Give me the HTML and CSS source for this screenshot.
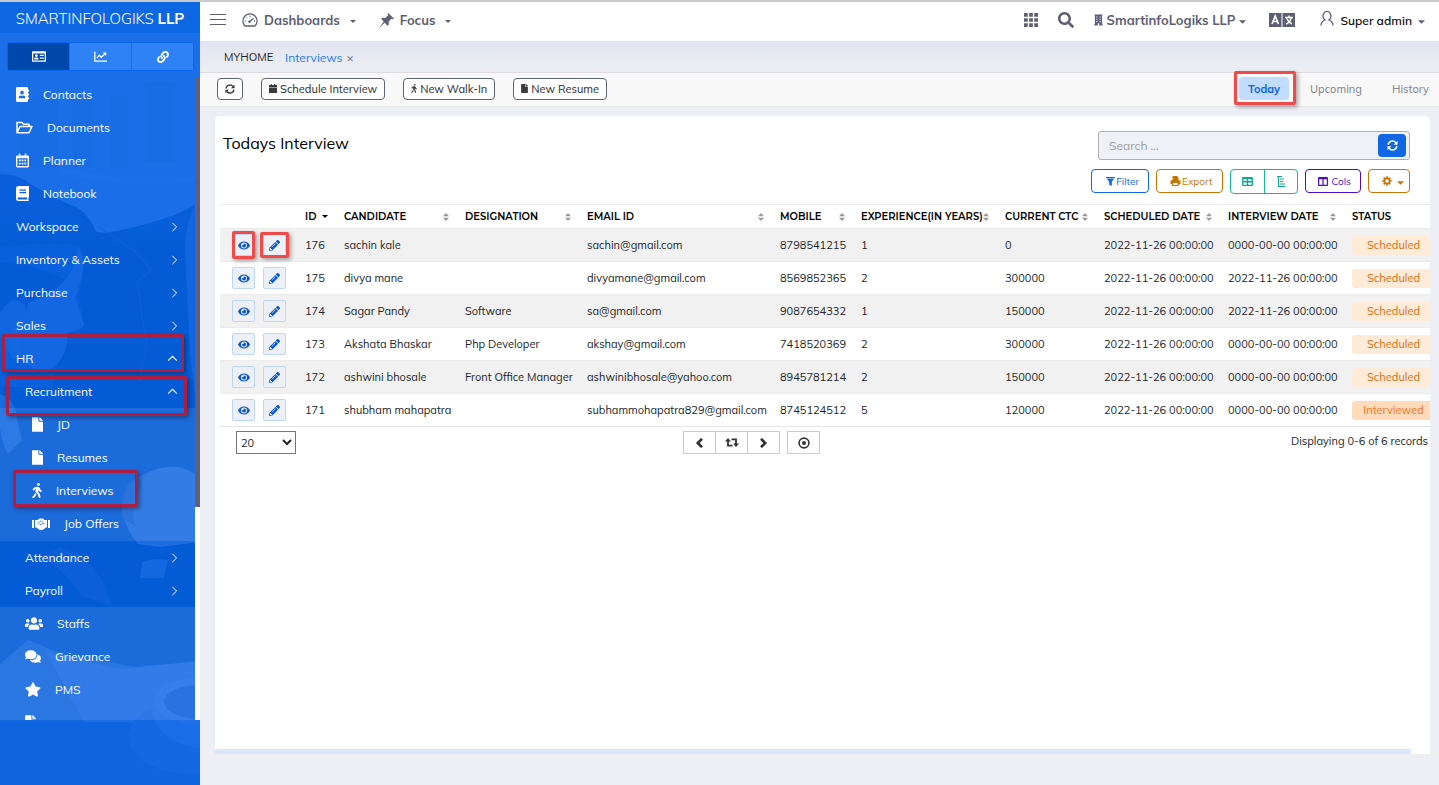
FILE: index.html
```html
<!DOCTYPE html>
<html lang="en">
<head>
    <meta charset="UTF-8">
    <meta name="viewport" content="width=device-width, initial-scale=1.0">
    <title>Todays Interview</title>
    <link rel="stylesheet" href="styles.css">
</head>
<body>
    <!-- Icon sprite -->
    <svg class="sprite" aria-hidden="true">
        <symbol id="eye" viewBox="0 0 576 512"><path d="M572.52 241.4C518.29 135.59 410.93 64 288 64S57.68 135.64 3.48 241.41a32.35 32.35 0 0 0 0 29.19C57.71 376.41 165.07 448 288 448s230.32-71.64 284.52-177.41a32.35 32.35 0 0 0 0-29.19zM288 400a144 144 0 1 1 144-144 143.93 143.93 0 0 1-144 144zm0-240a95.31 95.31 0 0 0-25.31 3.79 47.85 47.85 0 0 1-66.9 66.9A95.78 95.78 0 1 0 288 160z"/></symbol>
        <symbol id="pencil" viewBox="0 0 512 512"><path d="M497.9 142.1l-46.1 46.1c-4.7 4.7-12.3 4.7-17 0l-111-111c-4.7-4.7-4.7-12.3 0-17l46.1-46.1c18.7-18.7 49.1-18.7 67.9 0l60.1 60.1c18.8 18.7 18.8 49.1 0 67.9zM284.2 99.8L21.6 362.4.4 483.9c-2.9 16.4 11.4 30.6 27.8 27.8l121.5-21.3 262.6-262.6c4.7-4.7 4.7-12.3 0-17l-111-111c-4.8-4.7-12.4-4.7-17.1 0zM124.1 339.9c-5.5-5.5-5.5-14.3 0-19.8l154-154c5.5-5.5 14.3-5.5 19.8 0s5.5 14.3 0 19.8l-154 154c-5.5 5.5-14.3 5.5-19.8 0zM88 424h48v36.3l-64.5 11.3-31.1-31.1L51.7 376H88v48z"/></symbol>
        <symbol id="search" viewBox="0 0 512 512"><path d="M505 442.7L405.3 343c-4.5-4.5-10.6-7-17-7H372c27.6-35.3 44-79.7 44-128C416 93.1 322.9 0 208 0S0 93.1 0 208s93.1 208 208 208c48.3 0 92.7-16.4 128-44v16.3c0 6.4 2.5 12.5 7 17l99.7 99.7c9.4 9.4 24.6 9.4 33.9 0l28.3-28.3c9.4-9.4 9.4-24.6.1-34zM208 336c-70.7 0-128-57.2-128-128 0-70.7 57.2-128 128-128 70.7 0 128 57.2 128 128 0 70.7-57.2 128-128 128z"/></symbol>
        <symbol id="file" viewBox="0 0 384 512"><path d="M224 136V0H24C10.7 0 0 10.7 0 24v464c0 13.3 10.7 24 24 24h336c13.3 0 24-10.7 24-24V160H248c-13.2 0-24-10.8-24-24zm160-14.1v6.1H256V0h6.1c6.4 0 12.5 2.5 17 7l97.9 98c4.5 4.5 7 10.6 7 16.9z"/></symbol>
        <symbol id="walking" viewBox="0 0 320 512"><path d="M208 96c26.5 0 48-21.5 48-48S234.5 0 208 0s-48 21.5-48 48 21.5 48 48 48zm94.5 149.1l-23.3-11.8-9.7-29.4c-14.7-44.6-55.7-75.8-102.2-75.9-36-.1-55.9 10.1-93.3 25.2-21.6 8.7-39.3 25.2-49.7 46.2L17.6 213c-7.8 15.8-1.5 35 14.2 42.9 15.6 7.9 34.6 1.5 42.5-14.3L81 228c3.5-7 9.3-12.5 16.5-15.4l26.8-10.8-15.2 60.7c-5.2 20.8.4 42.9 14.9 58.8l59.9 65.4c7.2 7.9 12.3 17.4 14.9 27.7l18.3 73.3c4.3 17.1 21.7 27.6 38.8 23.3 17.1-4.3 27.6-21.7 23.3-38.8l-22.2-89c-2.6-10.3-7.7-19.9-14.9-27.7l-45.5-49.7 17.2-68.7 5.5 16.5c5.3 16.1 16.7 29.4 31.7 37l23.3 11.8c15.6 7.9 34.6 1.5 42.5-14.3 7.7-15.7 1.4-35.1-14.3-43zM73.6 385.8c-3.2 8.1-8 15.4-14.2 21.5l-50 50.1c-12.5 12.5-12.5 32.8 0 45.3s32.7 12.5 45.2 0l59.4-59.4c6.1-6.1 10.9-13.4 14.2-21.5l13.5-33.8c-55.3-60.3-38.7-41.8-47.4-53.7l-20.7 51.5z"/></symbol>
        <symbol id="star" viewBox="0 0 576 512"><path d="M259.3 17.8L194 150.2 47.9 171.5c-26.2 3.8-36.7 36.1-17.7 54.6l105.7 103-25 145.5c-4.5 26.3 23.2 46 46.4 33.7L288 439.6l130.7 68.7c23.2 12.2 50.9-7.4 46.4-33.7l-25-145.5 105.7-103c19-18.5 8.5-50.8-17.7-54.6L382 150.2 316.7 17.8c-11.7-23.6-45.6-23.9-57.4 0z"/></symbol>
        <symbol id="users" viewBox="0 0 640 512"><path d="M96 224c35.3 0 64-28.7 64-64s-28.7-64-64-64-64 28.7-64 64 28.7 64 64 64zm448 0c35.3 0 64-28.7 64-64s-28.7-64-64-64-64 28.7-64 64 28.7 64 64 64zm32 32h-64c-17.6 0-33.5 7.1-45.1 18.6 40.3 22.1 68.9 62 75.1 109.4h66c17.7 0 32-14.3 32-32v-32c0-35.3-28.7-64-64-64zm-256 0c61.9 0 112-50.1 112-112S381.9 32 320 32 208 82.1 208 144s50.1 112 112 112zm76.8 32h-8.3c-20.8 10-43.9 16-68.5 16s-47.6-6-68.5-16h-8.3C179.6 288 128 339.6 128 403.2V432c0 26.5 21.5 48 48 48h288c26.5 0 48-21.5 48-48v-28.8c0-63.6-51.6-115.2-115.2-115.2zm-223.7-13.4C161.5 263.1 145.6 256 128 256H64c-35.3 0-64 28.7-64 64v32c0 17.7 14.3 32 32 32h65.9c6.3-47.4 34.9-87.3 75.2-109.4z"/></symbol>
        <symbol id="comments" viewBox="0 0 576 512"><path d="M416 192c0-88.4-93.1-160-208-160S0 103.6 0 192c0 34.3 14.1 65.9 38 92-13.4 30.2-35.5 54.2-35.8 54.5-2.2 2.3-2.8 5.7-1.5 8.7S4.8 352 8 352c36.6 0 66.9-12.3 88.7-25 32.2 15.7 70.3 25 111.3 25 114.9 0 208-71.6 208-160zm122 220c23.9-26 38-57.7 38-92 0-66.9-53.5-124.2-129.3-148.1.9 6.6 1.3 13.3 1.3 20.1 0 105.9-107.7 192-240 192-10.8 0-21.3-.8-31.7-1.9C207.8 439.6 281.8 480 368 480c41 0 79.1-9.2 111.3-25 21.8 12.7 52.1 25 88.7 25 3.2 0 6.1-1.9 7.3-4.8 1.3-2.9.7-6.3-1.5-8.7-.3-.3-22.4-24.2-35.8-54.5z"/></symbol>
        <symbol id="contacts" viewBox="0 0 448 512"><path d="M436 160c6.6 0 12-5.4 12-12v-40c0-6.6-5.4-12-12-12h-20V48c0-26.5-21.5-48-48-48H48C21.5 0 0 21.5 0 48v416c0 26.5 21.5 48 48 48h320c26.5 0 48-21.5 48-48v-48h20c6.6 0 12-5.4 12-12v-40c0-6.6-5.4-12-12-12h-20v-64h20c6.6 0 12-5.4 12-12v-40c0-6.6-5.4-12-12-12h-20v-64h20zm-228-32c35.3 0 64 28.7 64 64s-28.7 64-64 64-64-28.7-64-64 28.7-64 64-64zm112 236.8c0 10.6-10 19.2-22.4 19.2H118.4C106 384 96 375.4 96 364.8v-19.2c0-31.8 30.1-57.6 67.2-57.6h5c12.3 5.1 25.7 8 39.8 8s27.6-2.9 39.8-8h5c37.1 0 67.2 25.8 67.2 57.6v19.2z"/></symbol>
        <symbol id="link" viewBox="0 0 512 512"><path d="M326.612 185.391c59.747 59.809 58.927 155.698.36 214.59-.11.12-.24.25-.36.37l-67.2 67.2c-59.27 59.27-155.699 59.262-214.96 0-59.27-59.26-59.27-155.7 0-214.96l37.106-37.106c9.84-9.84 26.786-3.3 27.294 10.606.648 17.722 3.826 35.527 9.69 52.721 1.986 5.822.567 12.262-3.783 16.612l-13.087 13.087c-28.026 28.026-28.905 73.66-1.155 101.96 28.024 28.579 74.086 28.749 102.325.51l67.2-67.19c28.191-28.191 28.073-73.757 0-101.83-3.701-3.694-7.429-6.564-10.341-8.569a16.037 16.037 0 0 1-6.947-12.606c-.396-10.567 3.348-21.456 11.698-29.806l21.054-21.055c5.521-5.521 14.182-6.199 20.584-1.731a152.482 152.482 0 0 1 20.522 17.197zM467.547 44.449c-59.261-59.262-155.69-59.27-214.96 0l-67.2 67.2c-.12.12-.25.25-.36.37-58.566 58.892-59.387 154.781.36 214.59a152.454 152.454 0 0 0 20.521 17.196c6.402 4.468 15.064 3.789 20.584-1.731l21.054-21.055c8.35-8.35 12.094-19.239 11.698-29.806a16.037 16.037 0 0 0-6.947-12.606c-2.912-2.005-6.64-4.875-10.341-8.569-28.073-28.073-28.191-73.639 0-101.83l67.2-67.19c28.239-28.239 74.3-28.069 102.325.51 27.75 28.3 26.872 73.934-1.155 101.96l-13.087 13.087c-4.35 4.35-5.769 10.79-3.783 16.612 5.864 17.194 9.042 34.999 9.69 52.721.509 13.906 17.454 20.446 27.294 10.606l37.106-37.106c59.271-59.259 59.271-155.699.001-214.959z"/></symbol>
        <symbol id="filter" viewBox="0 0 14 14"><path d="M0 0h14v1.500H0zM1 2.500h12L9 7.500V14l-4-2V7.500z"/></symbol>
        <symbol id="idcard" viewBox="0 0 16 12"><path fill-rule="evenodd" d="M1 0h14a1 1 0 0 1 1 1v10a1 1 0 0 1-1 1H1a1 1 0 0 1-1-1V1a1 1 0 0 1 1-1zM1.500 2.500v8h13v-8z"/><circle cx="5" cy="5" r="1.500"/><path d="M2.500 9.500V8.500q0-1.500 2.500-1.500t2.500 1.500v1zM9 4h4.500v1.500H9zM9 7h4.500v1.500H9z"/></symbol>
        <symbol id="chart" viewBox="0 0 16 13"><path fill="none" stroke="currentColor" stroke-width="1.600" d="M1 .5v11.700h15M3.500 8.500l3-3.500 2.500 2.500 4.500-4.500"/><path d="M10.500 1.500H15V6z"/></symbol>
        <symbol id="folder" viewBox="0 0 17 13"><path fill="none" stroke="currentColor" stroke-width="1.500" stroke-linejoin="round" d="M1 11.500V1.500h5l1.500 1.700H13v2.300M1 11.800l3-6.300h12l-3 6.300z"/></symbol>
        <symbol id="calgrid" viewBox="0 0 14 15"><path fill-rule="evenodd" d="M3 0h1.500v2h5V0H11v2h1.500A1.500 1.500 0 0 1 14 3.500v10a1.500 1.500 0 0 1-1.500 1.500h-11A1.500 1.500 0 0 1 0 13.500v-10A1.500 1.500 0 0 1 1.500 2H3zM1.500 5v8.500h11V5z"/><path d="M3 6.300h2v2H3zM6 6.300h2v2H6zM9 6.300h2v2H9zM3 9.800h2v2H3zM6 9.800h2v2H6zM9 9.800h2v2H9z"/></symbol>
        <symbol id="book" viewBox="0 0 13 15"><path fill-rule="evenodd" d="M2.500 0H13v11l-.6 1v2l.6 1H2.500A2.500 2.500 0 0 1 0 12.500v-10A2.500 2.500 0 0 1 2.500 0zM3.500 3.500v1.300h6.500V3.500zM3.500 6v1.300h6.500V6zM2.500 11.500a1 1 0 0 0 0 2h8.500v-2z"/></symbol>
        <symbol id="handshake" viewBox="0 0 18 12"><path d="M0 2h2v8H0zM16 2h2v8h-2z"/><path d="M3 2h2.500L7.500.5h3.500L12.500 2H15v7.500h-1.200L10.500 12H8L4.300 9.500H3z"/><path fill="none" stroke="#1f6ddb" stroke-width=".8" d="M5.500 6l3.700-3.300L13 6.500M7.500 6.300l2 .3 1.500-1.600"/></symbol>
        <symbol id="chev-right" viewBox="0 0 8 12"><path fill="none" stroke="currentColor" stroke-width="1.200" d="M1.500 1l5 5-5 5"/></symbol>
        <symbol id="chev-up" viewBox="0 0 12 8"><path fill="none" stroke="currentColor" stroke-width="1.200" d="M1 6.500l5-5 5 5"/></symbol>
        <symbol id="menu" viewBox="0 0 16 14"><path fill="none" stroke="currentColor" stroke-width="1.200" d="M0 1.500h16M0 6.500h16M0 11.500h16"/></symbol>
        <symbol id="gauge" viewBox="0 0 16 14"><path fill="none" stroke="currentColor" stroke-width="1.300" stroke-linejoin="round" d="M3 13a7.100 7.100 0 1 1 10 0zM7.500 8.800L11.500 5.500"/><circle cx="7.500" cy="8.800" r="1.200"/><path fill="none" stroke="currentColor" stroke-width="1" d="M3 8h1.200M8 2.800V4M4.500 4.300l.8.800M11.800 8H13"/></symbol>
        <symbol id="pin" viewBox="0 0 16 16"><path d="M10 0l6 6-1.300.7-1.500-.5-3 3 .3 3-1.300 1.300L6 10.300 0 16l5-7L2.200 6.200 3.500 5l3.200.4 3-3L9.300 1z"/></symbol>
        <symbol id="grid" viewBox="0 0 15 15"><path d="M0 0h4v4H0zM5.500 0h4v4h-4zM11 0h4v4h-4zM0 5.500h4v4H0zM5.500 5.500h4v4h-4zM11 5.500h4v4h-4zM0 11h4v4H0zM5.500 11h4v4h-4zM11 11h4v4h-4z"/></symbol>
        <symbol id="building" viewBox="0 0 10 12"><path fill-rule="evenodd" d="M.5 0h9v.8H9V11h1v1H5.800V9.500H4.200V12H0v-1h1V.8H.5zM2.500 2v1.200h1.300V2zM6.200 2v1.200h1.300V2zM2.500 4.500v1.200h1.300V4.500zM6.200 4.500v1.200h1.300V4.500zM2.500 7v1.200h1.300V7zM6.200 7v1.200h1.300V7z"/></symbol>
        <symbol id="language" viewBox="0 0 26 14"><path d="M0 0h12.500v14H0zM13.500 0H26v14H13.500z"/><path fill="none" stroke="#fff" stroke-width="1.600" d="M3 11L6.200 3l3.200 8M4.300 8.500h4"/><path fill="none" stroke="#fff" stroke-width="1.400" d="M16 4.500h8M20 2.500v2M22.500 4.500q-1.500 5-5.500 6.500M17.500 5q1.500 4 5.500 6"/></symbol>
        <symbol id="user" viewBox="0 0 14 16"><path fill="none" stroke="currentColor" stroke-width="1.300" d="M1 15.500q0-4 4-5.500a4 4.600 0 1 1 4 0q4 1.500 4 5.500"/></symbol>
        <symbol id="sync" viewBox="0 0 12 12"><path fill="none" stroke="currentColor" stroke-width="1.700" d="M1.300 5.300A4.700 4.700 0 0 1 9.700 3M10.700 6.700A4.700 4.700 0 0 1 2.300 9"/><path d="M11.500.8v4.400H7.200zM.5 11.200V6.800h4.300z"/></symbol>
        <symbol id="calendar" viewBox="0 0 9 10"><path d="M2 0h1.300v1.200h2.400V0H7v1.200h2v2H0v-2h2zM0 4h9v6H0z"/></symbol>
        <symbol id="print" viewBox="0 0 12 12"><path fill-rule="evenodd" d="M2.500 0H8l1.500 1.500V5H11a1 1 0 0 1 1 1v4h-2v2H2v-2H0V6a1 1 0 0 1 1-1h1.500zM3.500 8.500v2.200h5V8.500z"/></symbol>
        <symbol id="table" viewBox="0 0 12 10"><path fill-rule="evenodd" d="M1 0h10a1 1 0 0 1 1 1v8a1 1 0 0 1-1 1H1a1 1 0 0 1-1-1V1a1 1 0 0 1 1-1zM1.500 2.500v2h3.700v-2zM6.800 2.500v2h3.700v-2zM1.500 6v2.500h3.700V6zM6.800 6v2.500h3.700V6z"/></symbol>
        <symbol id="gantt" viewBox="0 0 9 11"><path fill="none" stroke="currentColor" d="M0 .5h5M1.500 .5v10M1 10.500h7M3 3h4M3 5.500h3M3 8h5"/></symbol>
        <symbol id="columns" viewBox="0 0 11 10"><path fill-rule="evenodd" d="M1 0h9a1 1 0 0 1 1 1v8a1 1 0 0 1-1 1H1a1 1 0 0 1-1-1V1a1 1 0 0 1 1-1zM1.300 2.500v6.200h3.500V2.500zM6.200 2.500v6.200h3.500V2.500z"/></symbol>
        <symbol id="gear" viewBox="0 0 12 12"><circle cx="6" cy="6" r="3.200" fill="none" stroke="currentColor" stroke-width="2.200"/><path fill="none" stroke="currentColor" stroke-width="2" d="M6 .3v2M6 9.700v2M.3 6h2M9.700 6h2M2 2l1.400 1.400M8.600 8.600L10 10M2 10l1.400-1.400M8.600 3.400L10 2"/></symbol>
        <symbol id="sort" viewBox="0 0 6 8"><path d="M3 0l3 3.300H0zM3 8l3-3.300H0z"/></symbol>
        <symbol id="caret" viewBox="0 0 6 3"><path d="M0 0h6L3 3z"/></symbol>
        <symbol id="prev" viewBox="0 0 9 10"><path fill="none" stroke="currentColor" stroke-width="2.600" d="M7 .8L2.800 5 7 9.200"/></symbol>
        <symbol id="next" viewBox="0 0 9 10"><path fill="none" stroke="currentColor" stroke-width="2.600" d="M2 .8L6.200 5 2 9.200"/></symbol>
        <symbol id="repeat" viewBox="0 0 14 9"><path fill="none" stroke="currentColor" stroke-width="1.800" d="M3 2.500v5.200h4.500M11 6.500V1.300H6.500"/><path d="M0 3.500L3 0l3 3.500zM8 5.500L11 9l3-3.500z"/></symbol>
        <symbol id="target" viewBox="0 0 12 12"><circle cx="6" cy="6" r="4.900" fill="none" stroke="currentColor" stroke-width="1.600"/><circle cx="6" cy="6" r="2"/></symbol>
    </svg>

    <aside class="sidebar">
        <svg class="backdrop" viewBox="0 0 200 785" preserveAspectRatio="xMidYMin slice" aria-hidden="true">
            <defs>
                <linearGradient id="jacket" x1="0" y1="0" x2="0" y2="1"><stop offset="0" stop-color="#0a60dc"/><stop offset=".15" stop-color="#035bd6"/><stop offset="1" stop-color="#035bd6"/></linearGradient>
            </defs>
            <path fill="#1a6fe8" d="M0 0h200v785H0z"/>
            <path fill="#0d66e2" d="M0 0h200v31H0z"/>
            <path fill="#166ae0" opacity=".35" d="M18 95h40v70H18zM72 90h22v75H72zM110 95h18v70h-18zM145 80h30v80h-30z"/>
            <path fill="#2474ea" opacity=".4" d="M60 165q60 16 140 8v5q-80 8-140-6z"/>
            <!-- jacket and hair -->
            <path fill="url(#jacket)" d="M0 172q20 0 30 10l26 14 22 10q12 8 18 24l10 1q34-6 66-17 20-8 28-16v590H0z"/>
            <path fill="#0c63de" opacity=".7" d="M0 245q40-5 78-2l5 10q3 20-5 40l6 28q0 8-14 8l-6 20q-10 18-12 36H0v-75q14-22 25-6l6 22q26-16 42-44-34-20-73-22z"/>
            <path fill="#1367e2" d="M78 243q6 10 5 22-1 16-8 30l9 27q-3 8-16 8l-2 16q-5 18-24 25-24-10-38-38 22-12 24-32 30-10 42-30 8-12 8-28z"/>
            <path fill="#1569e4" opacity=".7" d="M0 310q12-18 24-8 6 10-6 24l4 20-8 12q-8-8-14-28z"/>
            <path fill="none" stroke="#0f62d8" stroke-width="2" opacity=".6" d="M100 226l36 24 15 18-14 12 9 60-6 40"/>
            <path fill="#1266df" d="M185 245q2-30 10-42l5-3v175l-5 18-5-40z"/>
            <!-- hands and cuff -->
            <path fill="#1b6fe4" opacity=".8" d="M0 392q14 4 16 20l6 26-14 14q-6-10-8-26z"/>
            <path fill="#1c6de2" d="M145 472q20-10 38-6l17 8v66l-40 5-22-3q-10-12-16-30 0-30 23-40z"/>
            <path fill="#1263da" opacity=".8" d="M128 482q12-12 14 0-14 22-6 42l-12-6q-6-20 4-36z"/>
            <path fill="#1468e0" d="M142 560q10-4 26-2l-4 18h-24z"/>
            <path fill="#0b60da" d="M60 545q40 12 52 58l-30-8q-14-24-40-40z"/>
            <!-- paper and cup -->
            <path fill="#1268df" d="M0 662l28-24 34 14 80 14 58-8v130H0z"/>
            <path fill="#1a6ee7" d="M46 650l60 14q20 6 38 0l56-4v60H84z"/>
            <path fill="#0e65df" d="M0 720h200v65H0z"/>
            <ellipse cx="192" cy="735" rx="64" ry="37" fill="#1468e3"/>
            <path fill="#1a6de8" d="M150 690q0 52 50 56v-62z"/>
            <ellipse cx="200" cy="699" rx="46" ry="24" fill="#1f70e9"/>
            <ellipse cx="200" cy="700" rx="36" ry="17" fill="#1063de"/>
        </svg>
        <div class="brand">SMARTINFOLOGIKS <strong>LLP</strong></div>
        <div class="switcher">
            <button class="active" aria-label="Cards"><svg width="14" height="11"><use href="#idcard"/></svg></button>
            <button aria-label="Charts"><svg width="13" height="11"><use href="#chart"/></svg></button>
            <button aria-label="Links"><svg width="12" height="12"><use href="#link"/></svg></button>
        </div>
        <div class="menu-wrap">
            <nav class="menu">
                <a href="#"><svg width="13" height="15"><use href="#contacts"/></svg><span>Contacts</span></a>
                <a href="#"><svg width="17" height="13"><use href="#folder"/></svg><span>Documents</span></a>
                <a href="#"><svg width="13" height="15"><use href="#calgrid"/></svg><span>Planner</span></a>
                <a href="#"><svg width="13" height="15"><use href="#book"/></svg><span>Notebook</span></a>
                <a href="#">Workspace<svg class="chev" width="7" height="10"><use href="#chev-right"/></svg></a>
                <a href="#">Inventory &amp; Assets<svg class="chev" width="7" height="10"><use href="#chev-right"/></svg></a>
                <a href="#">Purchase<svg class="chev" width="7" height="10"><use href="#chev-right"/></svg></a>
                <a href="#">Sales<svg class="chev" width="7" height="10"><use href="#chev-right"/></svg></a>
                <a href="#" class="marked mark-hr">HR<svg class="chev" width="11" height="7"><use href="#chev-up"/></svg></a>
                <a href="#" class="sub marked mark-recruit">Recruitment<svg class="chev" width="11" height="7"><use href="#chev-up"/></svg></a>
                <div class="submenu deep">
                    <a href="#"><svg width="11" height="15"><use href="#file"/></svg><span>JD</span></a>
                    <a href="#"><svg width="11" height="15"><use href="#file"/></svg><span>Resumes</span></a>
                    <a href="#" class="marked mark-interview"><svg width="10" height="15"><use href="#walking"/></svg><span>Interviews</span></a>
                    <a href="#"><svg width="18" height="12"><use href="#handshake"/></svg><span>Job Offers</span></a>
                </div>
                <a href="#" class="sub">Attendance<svg class="chev" width="7" height="10"><use href="#chev-right"/></svg></a>
                <a href="#" class="sub">Payroll<svg class="chev" width="7" height="10"><use href="#chev-right"/></svg></a>
                <div class="submenu">
                    <a href="#"><svg width="18" height="15"><use href="#users"/></svg><span>Staffs</span></a>
                    <a href="#"><svg width="16" height="15"><use href="#comments"/></svg><span>Grievance</span></a>
                    <a href="#"><svg width="16" height="15"><use href="#star"/></svg><span>PMS</span></a>
                    <a href="#" aria-label="Reports"><svg width="11" height="15"><use href="#file"/></svg></a>
                </div>
            </nav>
            <div class="scrollbar"><div class="thumb"></div></div>
        </div>
    </aside>

    <main class="main">
        <header class="topbar">
            <button class="plain" aria-label="Toggle menu"><svg width="16" height="14"><use href="#menu"/></svg></button>
            <a href="#" class="nav-link nav-dash"><svg width="16" height="14"><use href="#gauge"/></svg>Dashboards<svg class="caret" width="6" height="3"><use href="#caret"/></svg></a>
            <a href="#" class="nav-link"><svg width="15" height="15"><use href="#pin"/></svg>Focus<svg class="caret" width="6" height="3"><use href="#caret"/></svg></a>
            <div class="top-right">
                <button class="plain" aria-label="Apps"><svg width="14" height="14"><use href="#grid"/></svg></button>
                <button class="plain" aria-label="Search"><svg width="16" height="16"><use href="#search"/></svg></button>
                <a href="#" class="company"><svg width="9" height="12"><use href="#building"/></svg>SmartinfoLogiks LLP<svg class="caret" width="7" height="4"><use href="#caret"/></svg></a>
                <button class="plain" aria-label="Language"><svg width="26" height="14"><use href="#language"/></svg></button>
                <a href="#" class="account"><svg class="avatar" width="14" height="16"><use href="#user"/></svg>Super admin<svg class="caret" width="7" height="4"><use href="#caret"/></svg></a>
            </div>
        </header>

        <div class="crumbs">
            <a href="#">MYHOME</a>
            <a href="#" class="current">Interviews</a>
            <button class="close" aria-label="Close tab">×</button>
        </div>

        <div class="toolbar">
            <button class="tool" aria-label="Refresh"><svg width="10" height="10"><use href="#sync"/></svg></button>
            <button class="tool"><svg width="8" height="9"><use href="#calendar"/></svg>Schedule Interview</button>
            <button class="tool"><svg width="6" height="9"><use href="#walking"/></svg>New Walk-In</button>
            <button class="tool"><svg width="7" height="9"><use href="#file"/></svg>New Resume</button>
            <div class="tabs">
                <button class="tab active marked mark-today">Today</button>
                <button class="tab">Upcoming</button>
                <button class="tab">History</button>
            </div>
        </div>

        <section class="card">
            <div class="card-head">
                <h1>Todays Interview</h1>
                <div class="controls">
                    <div class="search">
                        <input type="text" placeholder="Search ..." aria-label="Search">
                        <button aria-label="Reload"><svg width="11" height="11"><use href="#sync"/></svg></button>
                    </div>
                    <div class="actions">
                        <button class="btn blue"><svg width="9" height="9"><use href="#filter"/></svg>Filter</button>
                        <button class="btn orange"><svg width="11" height="10"><use href="#print"/></svg>Export</button>
                        <div class="btn-pair">
                            <button aria-label="Table view"><svg width="11" height="9"><use href="#table"/></svg></button>
                            <button aria-label="Gantt view"><svg width="9" height="11"><use href="#gantt"/></svg></button>
                        </div>
                        <button class="btn violet"><svg width="10" height="9"><use href="#columns"/></svg>Cols</button>
                        <button class="btn orange gear" aria-label="Settings"><svg width="10" height="10"><use href="#gear"/></svg><svg class="drop" width="7" height="4"><use href="#caret"/></svg></button>
                    </div>
                </div>
            </div>

            <div class="table-wrap">
                <table>
                    <colgroup>
                        <col class="c-act"><col class="c-id"><col class="c-name"><col class="c-desig"><col class="c-email"><col class="c-mobile"><col class="c-exp"><col class="c-ctc"><col class="c-date"><col class="c-date"><col class="c-status">
                    </colgroup>
                    <thead>
                        <tr>
                            <td></td>
                            <th><div>ID<svg class="down" width="6" height="3"><use href="#caret"/></svg></div></th>
                            <th><div>CANDIDATE<svg width="6" height="8"><use href="#sort"/></svg></div></th>
                            <th><div>DESIGNATION<svg width="6" height="8"><use href="#sort"/></svg></div></th>
                            <th><div>EMAIL ID<svg width="6" height="8"><use href="#sort"/></svg></div></th>
                            <th><div>MOBILE<svg width="6" height="8"><use href="#sort"/></svg></div></th>
                            <th><div>EXPERIENCE(IN YEARS)<svg width="6" height="8"><use href="#sort"/></svg></div></th>
                            <th><div>CURRENT CTC<svg width="6" height="8"><use href="#sort"/></svg></div></th>
                            <th><div>SCHEDULED DATE<svg width="6" height="8"><use href="#sort"/></svg></div></th>
                            <th><div>INTERVIEW DATE<svg width="6" height="8"><use href="#sort"/></svg></div></th>
                            <th><div>STATUS</div></th>
                        </tr>
                    </thead>
                    <tbody>
                        <tr>
                            <td><div class="row-actions"><button class="marked mark-eye" aria-label="View"><svg width="12" height="11"><use href="#eye"/></svg></button><button class="marked mark-pencil" aria-label="Edit"><svg width="11" height="11"><use href="#pencil"/></svg></button></div></td>
                            <td>176</td><td>sachin kale</td><td></td><td>sachin@gmail.com</td><td>8798541215</td><td>1</td><td>0</td><td>2022-11-26 00:00:00</td><td>0000-00-00 00:00:00</td>
                            <td><span class="badge">Scheduled</span></td>
                        </tr>
                        <tr>
                            <td><div class="row-actions"><button aria-label="View"><svg width="12" height="11"><use href="#eye"/></svg></button><button aria-label="Edit"><svg width="11" height="11"><use href="#pencil"/></svg></button></div></td>
                            <td>175</td><td>divya mane</td><td></td><td>divyamane@gmail.com</td><td>8569852365</td><td>2</td><td>300000</td><td>2022-11-26 00:00:00</td><td>2022-11-26 00:00:00</td>
                            <td><span class="badge">Scheduled</span></td>
                        </tr>
                        <tr>
                            <td><div class="row-actions"><button aria-label="View"><svg width="12" height="11"><use href="#eye"/></svg></button><button aria-label="Edit"><svg width="11" height="11"><use href="#pencil"/></svg></button></div></td>
                            <td>174</td><td>Sagar Pandy</td><td>Software</td><td>sa@gmail.com</td><td>9087654332</td><td>1</td><td>150000</td><td>2022-11-26 00:00:00</td><td>2022-11-26 00:00:00</td>
                            <td><span class="badge">Scheduled</span></td>
                        </tr>
                        <tr>
                            <td><div class="row-actions"><button aria-label="View"><svg width="12" height="11"><use href="#eye"/></svg></button><button aria-label="Edit"><svg width="11" height="11"><use href="#pencil"/></svg></button></div></td>
                            <td>173</td><td>Akshata Bhaskar</td><td>Php Developer</td><td>akshay@gmail.com</td><td>7418520369</td><td>2</td><td>300000</td><td>2022-11-26 00:00:00</td><td>0000-00-00 00:00:00</td>
                            <td><span class="badge">Scheduled</span></td>
                        </tr>
                        <tr>
                            <td><div class="row-actions"><button aria-label="View"><svg width="12" height="11"><use href="#eye"/></svg></button><button aria-label="Edit"><svg width="11" height="11"><use href="#pencil"/></svg></button></div></td>
                            <td>172</td><td>ashwini bhosale</td><td>Front Office Manager</td><td>ashwinibhosale@yahoo.com</td><td>8945781214</td><td>2</td><td>150000</td><td>2022-11-26 00:00:00</td><td>0000-00-00 00:00:00</td>
                            <td><span class="badge">Scheduled</span></td>
                        </tr>
                        <tr>
                            <td><div class="row-actions"><button aria-label="View"><svg width="12" height="11"><use href="#eye"/></svg></button><button aria-label="Edit"><svg width="11" height="11"><use href="#pencil"/></svg></button></div></td>
                            <td>171</td><td>shubham mahapatra</td><td></td><td>subhammohapatra829@gmail.com</td><td>8745124512</td><td>5</td><td>120000</td><td>2022-11-26 00:00:00</td><td>0000-00-00 00:00:00</td>
                            <td><span class="badge done">Interviewed</span></td>
                        </tr>
                    </tbody>
                </table>
            </div>

            <div class="pager">
                <select aria-label="Rows per page"><option>20</option><option>50</option><option>100</option></select>
                <div class="pages">
                    <button aria-label="Previous"><svg width="9" height="10"><use href="#prev"/></svg></button>
                    <button aria-label="Reload"><svg width="14" height="9"><use href="#repeat"/></svg></button>
                    <button aria-label="Next"><svg width="9" height="10"><use href="#next"/></svg></button>
                    <button class="alone" aria-label="Go to"><svg width="12" height="12"><use href="#target"/></svg></button>
                </div>
                <div class="count">Displaying 0-6 of 6 records</div>
            </div>
            <div class="strip"></div>
        </section>
    </main>
</body>
</html>
```
FILE: styles.css
```css
* { box-sizing: border-box; }
body { margin: 0; height: 100vh; display: flex; overflow: hidden; font-family: Mulish, Lato, sans-serif; font-size: 11px; color: #212529; background: #eeeff5; }
a { color: inherit; text-decoration: none; }
button { font: inherit; color: inherit; cursor: pointer; padding: 0; background: none; border: none; }
svg { fill: currentColor; flex: none; }
.sprite { display: none; }

/* Sidebar */
.sidebar { position: relative; width: 200px; flex: none; display: flex; flex-direction: column; color: #fff; background: #0f66e1; border-top: 2px solid #c9cacc; }
.backdrop { position: absolute; top: 0; left: 0; width: 100%; height: 100%; }
.brand { position: relative; height: 31px; line-height: 34px; text-align: center; font-size: 15px; font-weight: 300; white-space: nowrap; }
.brand strong { font-weight: 700; }
.switcher { position: relative; display: flex; margin: 9px 6px 0 7px; height: 29px; border: 1px solid #0765ee; border-radius: 3px; }
.switcher button { flex: 1; display: flex; align-items: center; justify-content: center; background: #2e82f5; border-left: 1px solid #1a70e6; }
.switcher .active { background: #0048ac; border-left: none; }
.menu-wrap { position: relative; display: flex; height: 643px; margin-top: 6px; overflow: hidden; }
.menu { flex: 1; padding-top: 1px; font-size: 12px; }
.menu a { position: relative; display: flex; align-items: center; height: 33px; padding: 0 17px 0 16px; }
.menu a span { padding-left: 14px; }
.menu .sub { padding-left: 25px; }
.menu .chev { margin-left: auto; }
.submenu { padding-bottom: 1px; background: rgba(255, 255, 255, 0.1); }
.submenu a { padding-left: 25px; }
.deep a { padding-left: 32px; }
.scrollbar { width: 5px; background: #fff; }
.thumb { height: 430px; background: #5f6079; }

/* Callout frames */
.marked { position: relative; z-index: 2; }
.marked::after { content: ""; position: absolute; border: 3px solid #f04b4b; border-radius: 2px; box-shadow: 2px 2px 4px rgba(0, 0, 0, 0.35); pointer-events: none; }
.menu .marked::after { border-color: #af1d40; }
.mark-hr::after { top: -8px; right: 11px; bottom: 3px; left: 2px; }
.mark-recruit::after { top: 1px; right: 8px; bottom: -8px; left: 6px; }
.mark-interview::after { top: -4px; right: 57px; bottom: 0; left: 13px; }
.mark-today::after { top: -6px; right: -7px; bottom: -5px; left: -5px; }
.mark-eye::after { top: -4px; right: -1px; bottom: -4px; left: -1px; }
.mark-pencil::after { top: -3px; right: -4px; bottom: -3px; left: -4px; }

/* Top bar */
.main { flex: 1; min-width: 0; display: flex; flex-direction: column; }
.topbar { display: flex; align-items: center; height: 42px; padding: 0 14px 3px 10px; color: #5d5f74; background: #fff; border-top: 2px solid #c9cacc; border-bottom: 1px solid #dfe3ee; }
.topbar svg { display: block; }
.nav-link { display: flex; align-items: center; gap: 6px; font-size: 13px; font-weight: 700; }
.nav-dash { margin: 0 23px 0 16px; }
.nav-link .caret, .company .caret, .account .caret { margin-top: 3px; }
.nav-link .caret { margin-left: 4px; }
.top-right { display: flex; align-items: center; gap: 20px; margin-left: auto; }
.company { display: flex; align-items: center; gap: 4px; margin-right: 3px; font-size: 13px; font-weight: 700; }
.account { display: flex; align-items: center; gap: 6px; margin-left: 5px; font-size: 12px; font-weight: 600; color: #111; }
.account svg { color: #5d5f74; }
.avatar { margin-bottom: 4px; }

.crumbs { display: flex; align-items: center; gap: 12px; height: 30px; padding-left: 24px; background: linear-gradient(#e1e5f1, #eeeff5); }
.crumbs .current { font-size: 12px; color: #2a7bf0; }
.crumbs .close { margin-left: -8px; font-size: 12px; font-weight: 700; color: #888; }

.toolbar { display: flex; align-items: center; height: 35px; padding: 0 10px 2px 17px; background: #f8f8f8; border-top: 1px solid #dcdce0; border-bottom: 1px solid #e6e6ea; }
.tool { display: flex; align-items: center; gap: 3px; height: 22px; margin-right: 18px; padding: 0 7px; font-weight: 500; color: #3b3b3b; background: #fff; border: 1px solid #5d6475; border-radius: 4px; }
.tabs { display: flex; align-items: center; gap: 30px; margin-left: auto; color: #8a8a90; }
.tab { font-weight: 500; }
.tab.active { height: 23px; padding: 0 9px; margin-right: -9px; font-weight: 700; color: #0f66e1; background: #c2dcff; border-radius: 4px; }

/* Card */
.card { flex: 1; display: flex; flex-direction: column; margin: 9px 9px 31px 15px; background: #fff; border-radius: 5px 5px 0 0; }
.card-head { display: flex; justify-content: space-between; align-items: flex-start; height: 88px; padding: 15px 20px 0 8px; }
h1 { margin: 0; font-size: 16px; line-height: 24px; font-weight: 400; color: #000; }
.search { display: flex; align-items: center; margin-left: auto; width: 312px; height: 29px; padding-right: 3px; background: #f0f1f6; border: 1px solid #adafb3; border-radius: 3px; }
.search input { flex: 1; min-width: 0; height: 25px; padding: 0 10px; font: inherit; font-size: 12px; background: none; border: none; outline: none; }
.search input::placeholder { color: #9b9ea4; }
.search button { display: flex; align-items: center; justify-content: center; width: 28px; height: 23px; color: #fff; background: #1067e3; border-radius: 4px; }
.actions { display: flex; justify-content: flex-end; gap: 7px; margin-top: 9px; }
.btn, .btn-pair { display: flex; align-items: center; justify-content: center; gap: 1px; height: 24px; font-size: 10px; background: #fff; border: 1px solid currentColor; border-radius: 4px; }
.blue { padding: 0 9px 0 14px; color: #1067e3; }
.orange { padding: 0 10px 0 13px; color: #c67604; }
.violet { padding: 0 9px 0 12px; gap: 3px; color: #4a0dce; }
.gear { gap: 5px; padding: 0 5px 0 13px; }
.drop { margin-top: 4px; }
.btn-pair { gap: 0; height: 25px; padding: 0; color: #0fa896; border-color: #16b79a; }
.btn-pair button { display: flex; align-items: center; justify-content: center; width: 33px; height: 100%; }
.btn-pair button + button { border-left: 1px solid #16b79a; }

.table-wrap { overflow: hidden; margin-left: 5px; }
table { width: 1223px; table-layout: fixed; border-collapse: collapse; }
.c-act { width: 77px; }
.c-id { width: 39px; }
.c-name { width: 121px; }
.c-desig { width: 122px; }
.c-email { width: 193px; }
.c-mobile { width: 81px; }
.c-exp { width: 144px; }
.c-ctc { width: 99px; }
.c-date { width: 124px; }
.c-status { width: 99px; }
th, td { padding: 0 8px; text-align: left; white-space: nowrap; border-top: 1px solid #ececec; }
thead tr { height: 24px; }
th { font-family: Montserrat, Inter, sans-serif; font-size: 10px; font-weight: 600; color: #000; }
th div { display: flex; align-items: center; justify-content: space-between; }
th svg { color: #9a9a9a; }
th .down { color: #000; }
tbody tr { height: 33px; }
tbody tr:nth-child(odd) { background: #f1f1f1; }
tbody tr:last-child td { border-bottom: 1px solid #e4e4e4; }
.row-actions { display: flex; gap: 8px; padding-left: 4px; }
.row-actions button { display: flex; align-items: center; justify-content: center; width: 23px; height: 22px; color: #0b57d0; background: #eef0f7; border: 1px solid #bcd7fb; border-radius: 2px; }
.badge { display: block; height: 19px; line-height: 18px; border-radius: 3px; text-align: center; font-weight: 500; color: #dc7a20; background: #ffebd8; }
.done { color: #ef7f2c; background: #ffdabb; }

.pager { display: grid; grid-template-columns: 3fr 5fr; align-items: start; padding: 4px 2px 0 21px; }
.pager select { width: 60px; height: 23px; font: inherit; color: #212529; background: #fff; border: 1px solid #767676; border-radius: 0; }
.pages { display: flex; }
.pages button { display: flex; align-items: center; justify-content: center; width: 33px; height: 23px; margin-right: -1px; color: #333; border: 1px solid #ccc; }
.pages .alone { margin-left: 8px; }
.pager { position: relative; }
.count { grid-column: 2; grid-row: 1; justify-self: end; line-height: 20px; }
.pages { grid-column: 2; grid-row: 1; justify-self: start; }
.strip { height: 5px; margin: auto 19px 0 0; background: #dbe8fc; }
```
